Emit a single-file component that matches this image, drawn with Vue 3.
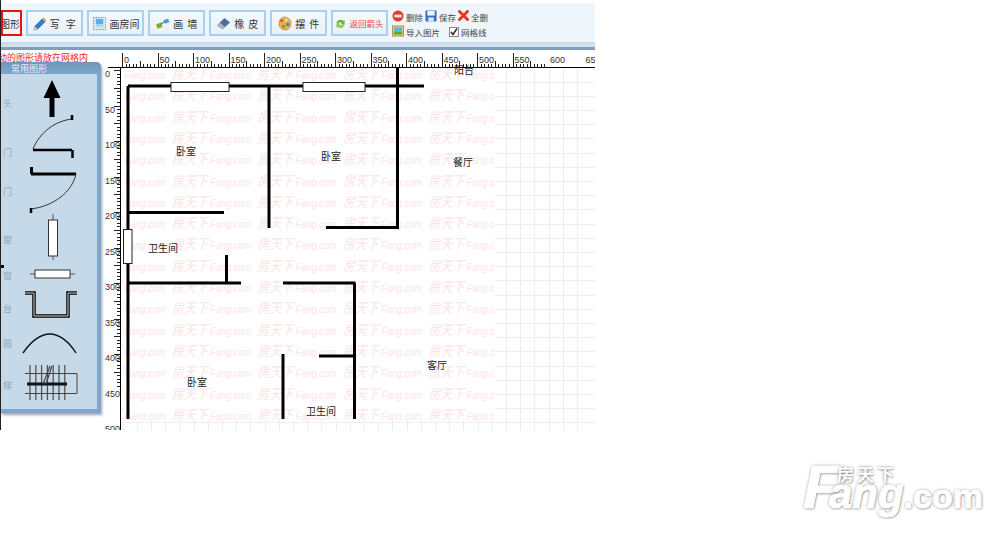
<template>
  <div class="page">
    <div class="editor">
      <div class="toolbar">
        <button class="tool tool-active"><span class="label">图形</span></button>
        <button class="tool">
          <svg class="icon" viewBox="0 0 16 16">
            <path d="M3 11 11 3l3 3-8 8-4 1z" fill="#2f7fd6" stroke="#1c5ba8" stroke-width=".6" />
            <path d="M11 3l1.500-1.500 2.500 2.500L14 6z" fill="#e8a33c" />
            <path d="M2 15l1-4 3 3z" fill="#f3d6a6" />
          </svg>
          <span class="label wide">写 字</span>
        </button>
        <button class="tool">
          <svg class="icon" viewBox="0 0 16 16">
            <rect x="1.500" y="1.500" width="13" height="13" fill="#e4e9ee" stroke="#7f8c98" stroke-dasharray="1.500 1" />
            <rect x="4" y="3" width="8" height="6" fill="#4cb6e8" />
            <rect x="4" y="9" width="8" height="3" fill="#a9d9ee" />
          </svg>
          <span class="label">画房间</span>
        </button>
        <button class="tool">
          <svg class="icon" viewBox="0 0 16 16">
            <rect x="2" y="8" width="5.500" height="5" fill="#7fae2e" transform="rotate(-18 4 11)" />
            <rect x="9.500" y="3.500" width="5" height="4" fill="#3f9fd8" transform="rotate(-18 12 5)" />
            <path d="M6 9l4-3" stroke="#666" stroke-width="1.200" />
          </svg>
          <span class="label medium">画 墙</span>
        </button>
        <button class="tool">
          <svg class="icon" viewBox="0 0 16 16">
            <path d="M1 10 9 2l6 5-8 7z" fill="#4a6f94" />
            <path d="M1 10l3-3 6 5-3 2z" fill="#a9b4bf" />
          </svg>
          <span class="label medium">橡 皮</span>
        </button>
        <button class="tool">
          <svg class="icon" viewBox="0 0 16 16">
            <path d="M8 1c4 0 7 3 7 7 0 5-4 7-6 7-3 0-7-2-7-7 0-4 3-7 6-7z" fill="#e8b04e" stroke="#b57f24" stroke-width=".6" />
            <circle cx="5" cy="5" r="1.500" fill="#d94a3a" />
            <circle cx="10" cy="4.500" r="1.500" fill="#f4e36a" />
            <circle cx="11.500" cy="9" r="1.700" fill="#2f7fd6" />
            <circle cx="7" cy="11" r="1.700" fill="#58a83a" />
          </svg>
          <span class="label medium">摆 件</span>
        </button>
        <button class="tool">
          <svg class="icon icon-back" viewBox="0 0 16 16">
            <path d="M2 8a6 6 0 0 1 10-4l2-1v6H8l2-2a3 3 0 0 0-5 1z" fill="#6fb52f" />
            <path d="M14 9a6 6 0 0 1-10 4l-2 1V8h6l-2 2a3 3 0 0 0 5-1z" fill="#8fc84a" />
          </svg>
          <span class="label back">返回箭头</span>
        </button>

        <div class="actions">
          <div class="action-row">
            <span class="action">
              <svg class="mini" viewBox="0 0 13 13">
                <circle cx="6.500" cy="6.500" r="6" fill="#d8402f" />
                <rect x="2.500" y="5" width="8" height="3" fill="#fbe3dd" />
              </svg>
              <span>删除</span>
            </span>
            <span class="action">
              <svg class="mini" viewBox="0 0 13 13">
                <rect x=".5" y=".5" width="12" height="12" rx="1" fill="#2f6fc4" />
                <rect x="2.500" y="1" width="8" height="5" fill="#eef4fb" />
                <rect x="3.500" y="8" width="6" height="4.500" fill="#dbe7f4" />
              </svg>
              <span>保存</span>
            </span>
            <span class="action action-clear">
              <svg class="mini-x" viewBox="0 0 11 11">
                <path d="M1.500 1.500l8 8M9.500 1.500l-8 8" stroke="#e2391f" stroke-width="3" stroke-linecap="round" />
              </svg>
              <span>全删</span>
            </span>
          </div>
          <div class="action-row">
            <span class="action">
              <svg class="mini" viewBox="0 0 13 13">
                <rect x=".5" y="1" width="12" height="11" fill="#f0d98a" stroke="#b58a2c" />
                <rect x="2" y="2.500" width="9" height="4.500" fill="#5db5e6" />
                <rect x="2" y="7" width="9" height="3.500" fill="#58a83a" />
              </svg>
              <span>导入图片</span>
            </span>
            <label class="action action-grid">
              <svg class="check" viewBox="0 0 10 10">
                <rect x=".5" y=".5" width="9" height="9" fill="#fff" stroke="#8a8a8a" />
                <path d="M2 5l2 2.500L8 1.500" fill="none" stroke="#222" stroke-width="1.400" />
              </svg>
              <span>网格线</span>
            </label>
          </div>
        </div>
      </div>

      <div class="stage">
        <div class="side">
          <div class="notice"><span>拖动的图形请放在网格内</span></div>
          <div class="panel">
            <div class="panel-title">常用图形</div>
            <svg class="shapes" viewBox="1 74 96 335">
              <text v-for="item in panelLabels" :key="item.y" class="panel-label" x="12" :y="item.y" text-anchor="end">{{ item.text }}</text>
              <rect x="1" y="265" width="3" height="3" fill="#000" />

              <!-- 箭头 -->
              <path d="M52 80l8.500 18h-6v19h-5V98h-6z" fill="#000" />
              <!-- 单开门 -->
              <path d="M72 119C55 121 40 132 33 149" fill="none" stroke="#333" />
              <path d="M72 115v5M33 150h39M72.500 150v8" fill="none" stroke="#000" stroke-width="2.500" />
              <!-- 单开门 反向 -->
              <path d="M31 174h45M31.500 167v7" fill="none" stroke="#000" stroke-width="3" />
              <path d="M76 174C72 192 54 206 31 209" fill="none" stroke="#333" />
              <path d="M31 208v5" stroke="#000" stroke-width="2.500" />
              <!-- 窗 -->
              <path d="M53 214v46" stroke="#555" />
              <rect x="48.500" y="220" width="9" height="36" fill="#fff" stroke="#333" />
              <path d="M30 274h45" stroke="#555" />
              <rect x="35" y="270" width="35" height="8" fill="#fff" stroke="#333" />
              <!-- 阳台 -->
              <path d="M25 293h9v23h34V293h9" fill="none" stroke="#000" stroke-width="3.500" />
              <path d="M25 293h9v23h34V293h9" fill="none" stroke="#ddd" />
              <!-- 圆弧 -->
              <path d="M23 353C32 340 42 334 50 334S68 340 76 353" fill="none" stroke="#111" stroke-width="1.400" />
              <!-- 楼梯 -->
              <path v-for="x in stairLines" :key="x" :d="`M${x} 365v35`" stroke="#555" stroke-width="1.300" />
              <path d="M25 373.500h52v20H25" fill="none" stroke="#444" />
              <path d="M27 384h40" stroke="#111" stroke-width="3" />
              <path d="M43 384l7-18M46 384l6-18" stroke="#444" stroke-width="1.200" />
            </svg>
          </div>
        </div>

        <svg class="sheet" viewBox="102 50 493 380">
          <defs>
            <clipPath id="mark-clip">
              <rect x="122" y="68" width="373" height="352" />
            </clipPath>
          </defs>

          <g stroke="#eeeeee">
            <path v-for="x in gridX" :key="'gx' + x" :d="`M${x} 68V430`" />
            <path v-for="y in gridY" :key="'gy' + y" :d="`M122 ${y}H595`" />
          </g>
          <!-- 水印底图盖住网格 -->
          <rect x="122" y="68" width="373" height="352" fill="#fff" />

          <g clip-path="url(#mark-clip)" class="mark">
            <g v-for="y in markRows" :key="y">
              <template v-for="x in markCols" :key="x">
                <text :x="x" :y="y" class="mark-cn" textLength="36" lengthAdjust="spacingAndGlyphs">房天下</text>
                <text :x="x + 38" :y="y" class="mark-en" textLength="41" lengthAdjust="spacingAndGlyphs">Fang.com</text>
              </template>
            </g>
          </g>

          <!-- 标尺 -->
          <path d="M108 67.500H595M120.500 67V430" stroke="#000" />
          <path v-for="tick in topTicks" :key="'t' + tick.x" :d="`M${tick.x} 67V${67 - tick.size}`" stroke="#222" />
          <path v-for="tick in leftTicks" :key="'l' + tick.y" :d="`M120 ${tick.y}H${120 - tick.size}`" stroke="#222" />
          <text v-for="tick in topLabels" :key="'tl' + tick.text" class="ruler-text" :x="tick.x + 2" y="63">{{ tick.text }}</text>
          <text v-for="tick in leftLabels" :key="'ll' + tick.text" class="ruler-text" x="105" :y="tick.y + 7">{{ tick.text }}</text>

          <!-- 墙 -->
          <path d="M128 86H424M128 86V419M269 86V228M128 212.500H224M326 227.500H399M397.500 67V229M226.500 255V283M128 283H241M283 283H355.500M354.500 283V419M319 356H354M283 354V419" fill="none" stroke="#000" stroke-width="3" />
          <g fill="#fff" stroke="#222">
            <rect x="171" y="82.500" width="58" height="9" />
            <rect x="303" y="82.500" width="62" height="9" />
            <rect x="123.500" y="229.500" width="8.500" height="34" />
          </g>

          <text v-for="room in rooms" :key="room.x" class="room" :x="room.x" :y="room.y">{{ room.text }}</text>
        </svg>
      </div>
    </div>

    <div class="logo">
      <span class="logo-cn">房天下</span>
      <span class="logo-f">F</span><span class="logo-ang">ang</span><span class="logo-com">.com</span>
    </div>
  </div>
</template>

<script setup>
const range = (start, count, step) => Array.from({ length: count }, (_, i) => start + i * step)

const panelLabels = [
  { text: '头', y: 107 },
  { text: '门', y: 156 },
  { text: '门', y: 195 },
  { text: '窗', y: 243 },
  { text: '窗', y: 279 },
  { text: '台', y: 312 },
  { text: '圆', y: 347 },
  { text: '梯', y: 389 }
]
const stairLines = range(30, 7, 5.8)

const gridX = range(122.5, 33, 14.2).map((x) => Math.round(x) + 0.5)
const gridY = range(81.5, 25, 14.2).map((y) => Math.round(y) + 0.5)

const markRows = range(79, 17, 21.3)
const markCols = range(1, 6, 85.5)

const UNIT = 0.71
const topTicks = range(0, 120, 5).map((v) => ({
  x: Math.round(122 + v * UNIT) + 0.5,
  size: v % 50 === 0 ? 14 : v % 25 === 0 ? 6 : 3
}))
const leftTicks = range(0, 90, 5).map((v) => ({
  y: Math.round(70 + v * UNIT) + 0.5,
  size: v % 25 === 0 ? 6 : 3
}))
const topLabels = range(0, 14, 50).map((v) => ({ text: v, x: 122 + v * UNIT }))
const leftLabels = range(0, 11, 50).map((v) => ({ text: v, y: 70 + v * UNIT }))

const rooms = [
  { text: '卧室', x: 176, y: 155 },
  { text: '卧室', x: 321, y: 160 },
  { text: '阳台', x: 454, y: 74 },
  { text: '餐厅', x: 453, y: 166 },
  { text: '卫生间', x: 148, y: 252 },
  { text: '卧室', x: 187, y: 386 },
  { text: '客厅', x: 427, y: 369 },
  { text: '卫生间', x: 306, y: 415 }
]
</script>

<style>
html,
body {
  margin: 0;
  background: #fff;
}
</style>

<style scoped>
.page {
  position: relative;
  width: 1000px;
  height: 535px;
  overflow: hidden;
  background: #fff;
  font-family: "Liberation Sans", "Noto Sans CJK SC", sans-serif;
}

.editor {
  width: 595px;
  height: 430px;
  box-sizing: border-box;
  padding-top: 3px;
  border-left: 1px solid #222;
  overflow: hidden;
}

.toolbar {
  display: flex;
  align-items: flex-start;
  gap: 4px;
  height: 47px;
  box-sizing: border-box;
  padding-top: 7px;
  background: linear-gradient(#eef5fb 0, #eef5fb 39px, #c6dbec 39px, #d4e4f1 44px);
  border-bottom: 3px solid #7f9fbd;
}

.tool {
  display: flex;
  align-items: center;
  justify-content: center;
  gap: 3px;
  width: 57px;
  height: 26px;
  padding: 0;
  box-sizing: border-box;
  background: linear-gradient(#f4f9fd, #e8f1f8);
  border: 2px solid #a8d0ef;
  font: inherit;
  color: #333;
}

.tool-active {
  width: 21px;
  justify-content: flex-end;
  border-color: #ee1111;
  background: #f2f7fb;
  overflow: hidden;
}

.label {
  font-size: 10px;
  white-space: nowrap;
}

.wide {
  letter-spacing: 1.500px;
}

.medium {
  letter-spacing: 0.500px;
}

.back {
  font-size: 8.500px;
  color: #f03a3a;
}

.icon {
  flex: none;
  width: 15px;
  height: 15px;
}

.icon-back {
  width: 11px;
  height: 11px;
}

.actions {
  display: flex;
  flex-direction: column;
  gap: 2px;
  font-size: 8.500px;
  color: #444;
}

.action-row {
  display: flex;
  align-items: flex-end;
  gap: 2px;
  height: 13px;
}

.action {
  display: flex;
  align-items: flex-end;
  gap: 2px;
  white-space: nowrap;
  line-height: 10px;
}

.action-grid {
  margin-left: 7px;
}

.mini {
  width: 12px;
  height: 12px;
  margin-bottom: 1px;
}

.mini-x {
  width: 11px;
  height: 11px;
  margin-bottom: 2px;
}

.check {
  width: 10px;
  height: 10px;
  margin-bottom: 1px;
}

.stage {
  display: flex;
  height: 380px;
}

.side {
  flex: none;
  width: 101px;
}

.notice {
  display: flex;
  justify-content: flex-end;
  width: 87px;
  height: 12px;
  overflow: hidden;
  font-size: 9px;
  line-height: 16px;
  color: #f5222d;
  white-space: nowrap;
}

.panel {
  width: 100px;
  height: 351px;
  box-sizing: border-box;
  background: #c6d9e9;
  border-right: 4px solid #7fa6cb;
  border-bottom: 4px solid #7fa6cb;
  border-top-right-radius: 5px;
  box-shadow: 1px 2px 3px rgba(70, 90, 110, 0.55);
}

.panel-title {
  height: 12px;
  margin-right: -4px;
  padding-left: 10px;
  background: linear-gradient(#6f97bd, #7fa6cb);
  border-top-right-radius: 5px;
  font-size: 9px;
  line-height: 15px;
  color: #e8f0f7;
  overflow: hidden;
}

.shapes {
  display: block;
  width: 96px;
  height: 335px;
}

.panel-label {
  font-size: 9px;
  fill: #8ea9c0;
}

.sheet {
  display: block;
  flex: none;
  width: 493px;
  height: 380px;
}

.mark-cn {
  font-size: 14px;
  font-style: italic;
  fill: #fae5e5;
}

.mark-en {
  font-size: 11.500px;
  font-style: italic;
  fill: #fae5e5;
}

.ruler-text {
  font-size: 9px;
  fill: #333;
}

.room {
  font-size: 10px;
  fill: #222;
}

/* 右下角水印 */
.logo {
  position: absolute;
  left: 803px;
  top: 456px;
  width: 190px;
  height: 70px;
  font-weight: bold;
  font-style: italic;
  color: #fff;
  line-height: 62px;
  white-space: nowrap;
  -webkit-text-stroke: 1px #fff;
  text-shadow: 0 0 3px rgba(0, 0, 0, 0.55), 1px 1px 2px rgba(0, 0, 0, 0.3);
}

.logo-f {
  font-size: 62px;
}

.logo-ang {
  margin-left: -12px;
  font-size: 42px;
}

.logo-com {
  font-size: 34px;
  font-style: normal;
}

.logo-cn {
  position: absolute;
  left: 34px;
  top: 11px;
  font-size: 17px;
  line-height: 17px;
  font-style: normal;
  font-weight: 500;
  letter-spacing: 3px;
  -webkit-text-stroke: 0.4px #fff;
}
</style>
